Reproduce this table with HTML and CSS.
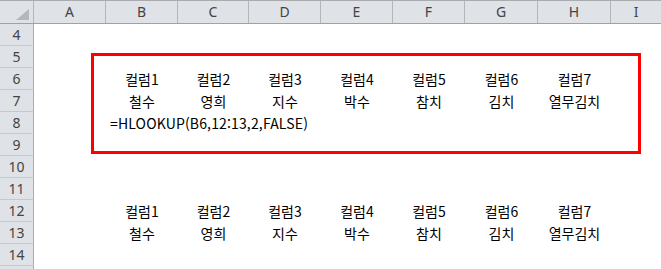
FILE: index.html
```html
<!DOCTYPE html>
<html lang="ko">
<head>
<meta charset="utf-8">
<link rel="stylesheet" href="styles.css">
</head>
<body>
<div class="sheet">
  <div class="row head">
    <div class="corner"><span class="tri"></span></div>
    <div class="ch">A</div><div class="ch">B</div><div class="ch">C</div><div class="ch">D</div>
    <div class="ch">E</div><div class="ch">F</div><div class="ch">G</div><div class="ch">H</div><div class="ch last">I</div>
  </div>
  <div class="row"><div class="rh">4</div></div>
  <div class="row"><div class="rh">5</div></div>
  <div class="row">
    <div class="rh">6</div><div class="c"></div>
    <div class="c">컬럼1</div><div class="c">컬럼2</div><div class="c">컬럼3</div><div class="c">컬럼4</div>
    <div class="c">컬럼5</div><div class="c">컬럼6</div><div class="c">컬럼7</div>
  </div>
  <div class="row">
    <div class="rh">7</div><div class="c"></div>
    <div class="c">철수</div><div class="c">영희</div><div class="c">지수</div><div class="c">박수</div>
    <div class="c">참치</div><div class="c">김치</div><div class="c">열무김치</div>
  </div>
  <div class="row">
    <div class="rh">8</div><div class="c"></div>
    <div class="c formula">=HLOOKUP(B6,12:13,2,FALSE)</div>
  </div>
  <div class="row"><div class="rh">9</div></div>
  <div class="row"><div class="rh">10</div></div>
  <div class="row"><div class="rh">11</div></div>
  <div class="row">
    <div class="rh">12</div><div class="c"></div>
    <div class="c">컬럼1</div><div class="c">컬럼2</div><div class="c">컬럼3</div><div class="c">컬럼4</div>
    <div class="c">컬럼5</div><div class="c">컬럼6</div><div class="c">컬럼7</div>
  </div>
  <div class="row">
    <div class="rh">13</div><div class="c"></div>
    <div class="c">철수</div><div class="c">영희</div><div class="c">지수</div><div class="c">박수</div>
    <div class="c">참치</div><div class="c">김치</div><div class="c">열무김치</div>
  </div>
  <div class="row"><div class="rh">14</div></div>
  <div class="row"><div class="rh"></div></div>
  <div class="redbox"></div>
</div>
</body>
</html>
```
FILE: styles.css
```css
html, body {
  margin: 0;
  padding: 0;
  background: #ffffff;
}
body {
  width: 661px;
  height: 269px;
  overflow: hidden;
  font-family: "Noto Sans CJK KR", "Noto Sans", sans-serif;
}
.sheet {
  position: relative;
  width: 661px;
  height: 269px;
  overflow: hidden;
}
.row {
  display: grid;
  grid-template-columns: 34px 72px 72px 71px 72px 72px 72px 73px 73px 1fr;
  height: 22px;
}
.row.head {
  height: 24px;
  background: #dfe2e6;
  border-top: 1px solid #a9abae;
  border-bottom: 1px solid #9fa1a4;
  box-sizing: border-box;
}
.corner {
  position: relative;
  border-right: 1px solid #b4b6b9;
}
.tri {
  position: absolute;
  right: 4px;
  bottom: 3px;
  width: 0;
  height: 0;
  border-left: 13px solid transparent;
  border-bottom: 11px solid #b5b7ba;
}
.ch {
  border-right: 1px solid #b4b6b9;
  text-align: center;
  font-family: "Noto Sans", sans-serif;
  font-size: 14px;
  line-height: 22px;
  color: #444444;
}
.ch.last {
  border-right: none;
}
.rh {
  background: #dfe2e6;
  border-right: 1px solid #a9abae;
  border-bottom: 1px solid #c6c8cb;
  box-sizing: border-box;
  text-align: center;
  font-family: "Noto Sans", sans-serif;
  font-size: 14px;
  line-height: 21px;
  color: #444444;
}
.c {
  text-align: center;
  font-size: 14px;
  line-height: 22px;
  color: #000000;
  white-space: nowrap;
}
.c.formula {
  text-align: left;
  padding-left: 4px;
  overflow: visible;
  letter-spacing: 0.15px;
}
.redbox {
  position: absolute;
  left: 91px;
  top: 53px;
  width: 550px;
  height: 101px;
  border: 3px solid #ff0000;
  box-sizing: border-box;
}
```
